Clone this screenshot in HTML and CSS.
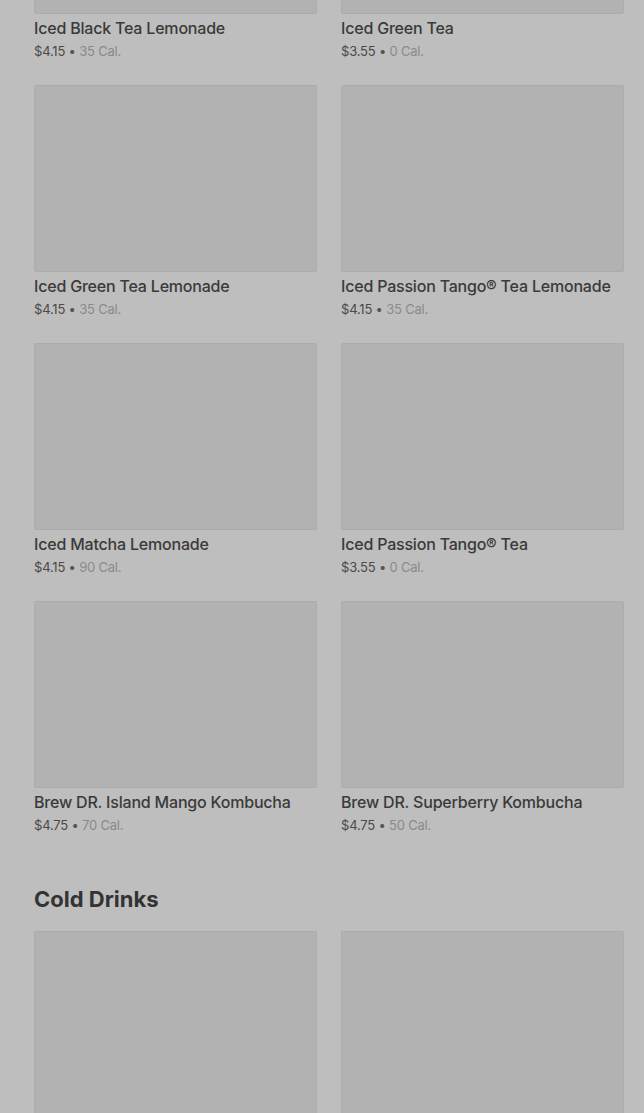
FILE: index.html
```html
<!DOCTYPE html>
<html>
<head>
  <title>Menu</title>
  <link rel="stylesheet" href="styles.css">
</head>
<body>
  <main class="menu">
    <section class="category">
      <div class="product-grid">
        <a class="product" href="#">
          <div class="product-image"></div>
          <h3>Iced Black Tea Lemonade</h3>
          <p class="meta"><span class="price">$4.15</span> • <span class="cal">35 Cal.</span></p>
        </a>
        <a class="product" href="#">
          <div class="product-image"></div>
          <h3>Iced Green Tea</h3>
          <p class="meta"><span class="price">$3.55</span> • <span class="cal">0 Cal.</span></p>
        </a>
        <a class="product" href="#">
          <div class="product-image"></div>
          <h3>Iced Green Tea Lemonade</h3>
          <p class="meta"><span class="price">$4.15</span> • <span class="cal">35 Cal.</span></p>
        </a>
        <a class="product" href="#">
          <div class="product-image"></div>
          <h3>Iced Passion Tango® Tea Lemonade</h3>
          <p class="meta"><span class="price">$4.15</span> • <span class="cal">35 Cal.</span></p>
        </a>
        <a class="product" href="#">
          <div class="product-image"></div>
          <h3>Iced Matcha Lemonade</h3>
          <p class="meta"><span class="price">$4.15</span> • <span class="cal">90 Cal.</span></p>
        </a>
        <a class="product" href="#">
          <div class="product-image"></div>
          <h3>Iced Passion Tango® Tea</h3>
          <p class="meta"><span class="price">$3.55</span> • <span class="cal">0 Cal.</span></p>
        </a>
        <a class="product" href="#">
          <div class="product-image"></div>
          <h3>Brew DR. Island Mango Kombucha</h3>
          <p class="meta"><span class="price">$4.75</span> • <span class="cal">70 Cal.</span></p>
        </a>
        <a class="product" href="#">
          <div class="product-image"></div>
          <h3>Brew DR. Superberry Kombucha</h3>
          <p class="meta"><span class="price">$4.75</span> • <span class="cal">50 Cal.</span></p>
        </a>
      </div>
    </section>

    <section class="category">
      <h2>Cold Drinks</h2>
      <div class="product-grid">
        <a class="product" href="#">
          <div class="product-image"></div>
        </a>
        <a class="product" href="#">
          <div class="product-image"></div>
        </a>
      </div>
    </section>
  </main>
</body>
</html>
```

FILE: styles.css
```css
/* Menu page under the dim overlay */

html {
    height: 100%;
}

body {
    margin: 0;
    padding: 0;
    font-family: Inter, "Liberation Sans", sans-serif;
    background: #bebebe;
    overflow: hidden;
}

.menu {
    margin-top: -173px;
    padding: 0 20px 0 34px;
}

.category + .category {
    margin-top: 51px;
}

.category h2 {
    margin: 0 0 18px;
    font-size: 22px;
    line-height: 28px;
    font-weight: 700;
    letter-spacing: 0;
    color: #333;
}

.product-grid {
    display: grid;
    grid-template-columns: 283px 283px;
    column-gap: 24px;
    row-gap: 25px;
}

.product {
    display: block;
    color: inherit;
    text-decoration: none;
}

.product-image {
    height: 187px;
    background: #b2b2b2;
    border-radius: 2px;
    box-shadow: inset 0 0 0 1px rgba(0, 0, 0, .03);
}

.product h3 {
    margin: 4px 0 0;
    font-size: 16px;
    line-height: 20px;
    font-weight: 500;
    letter-spacing: -0.2px;
    color: #3a3a3a;
}

.product .meta {
    margin: 4px 0 0;
    font-size: 13px;
    line-height: 18px;
    letter-spacing: -0.2px;
    color: #555;
}

.product .price {
    color: #4a4a4a;
}

.product .cal {
    color: #8a8a8a;
}
```
